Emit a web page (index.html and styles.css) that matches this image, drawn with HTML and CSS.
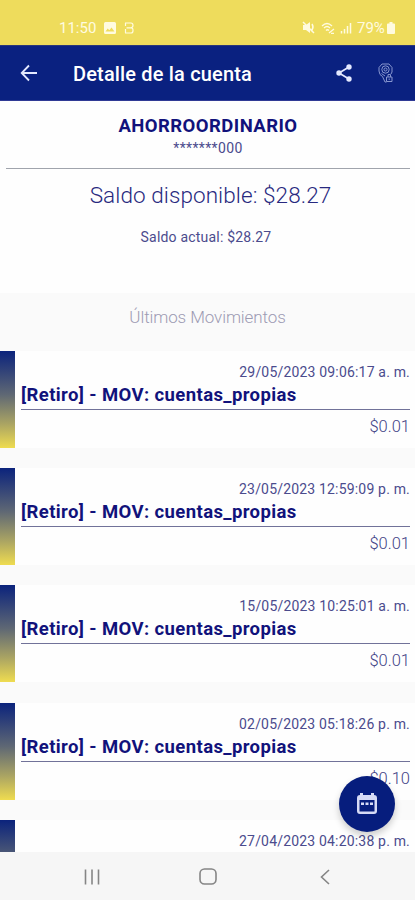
FILE: index.html
```html
<!DOCTYPE html>
<html lang="es">
<head>
<meta charset="utf-8">
<meta name="viewport" content="width=device-width, initial-scale=1">
<title>Detalle de la cuenta</title>
<link rel="stylesheet" href="styles.css">
</head>
<body>
<div class="screen">
  <header class="status">
    <span class="clock">11:50</span>
    <svg class="status-photo" width="12" height="12" viewBox="0 0 12 12"><path fill="currentColor" fill-rule="evenodd" d="M1.500 0h9Q12 0 12 1.500v9Q12 12 10.500 12h-9Q0 12 0 10.500v-9Q0 0 1.500 0ZM1.500 9.500h9L7.500 5.500 5.300 8.300 3.700 6.600Z"/></svg>
    <svg class="status-b" width="10" height="12" viewBox="0 0 10 12" fill="none" stroke="currentColor" stroke-width="1.200"><path d="M1 1h6q2 0 2 2.300T7 5.800H2.500M1 11h6q2 0 2-2.600T7 5.800M1.500 1v3M1.500 7v4"/></svg>
    <svg class="status-mute" width="13" height="13" viewBox="0 0 13 13"><path fill="currentColor" d="M1 4h3l4-3v11L4 9H1Z"/><path d="M1 1l11 11M10 3q2 3 0 6" fill="none" stroke="currentColor" stroke-width="1.500"/></svg>
    <svg class="status-wifi" width="15" height="12" viewBox="0 0 15 12" fill="none" stroke="currentColor" stroke-width="1.300"><path d="M1 4q5-5 10 0M3 6q3-3 6 0M5 8.500q1.500-1.500 3 0M8 11l5-4M10 11.500h3"/></svg>
    <svg class="status-signal" width="12" height="12" viewBox="0 0 12 12" stroke="currentColor" stroke-width="1.500"><path d="M1.500 9v2.500M4.500 7v4.500M7.500 4v7.500M10.500 1v10.500"/></svg>
    <span class="percent">79%</span>
    <svg class="status-battery" width="8" height="12" viewBox="0 0 8 12"><path fill="currentColor" d="M2.500 0h3v1.500H7q1 0 1 1V11q0 1-1 1H1q-1 0-1-1V2.500q0-1 1-1h1.500Z"/></svg>
  </header>
  <nav class="appbar">
    <svg class="back" width="18" height="18" viewBox="0 0 18 18" fill="none" stroke="currentColor" stroke-width="1.800"><path d="M17 9H2M9 1.500 1.700 9 9 16.500"/></svg>
    <h1 class="title">Detalle de la cuenta</h1>
    <svg class="share" width="16" height="18" viewBox="0 0 16 18"><path d="M13 3 3 9l10 6" fill="none" stroke="currentColor" stroke-width="1.700"/><g fill="currentColor"><circle cx="13" cy="3" r="2.700"/><circle cx="3" cy="9" r="2.700"/><circle cx="13" cy="15" r="2.700"/></g></svg>
    <svg class="pin" width="15" height="20" viewBox="0 0 15 20" fill="none" stroke="currentColor" stroke-width="1"><path d="M8.500 19H7L4.500 13.500 2 11.500 1 8V4.500L4 1h7l3 3.500V9l-1 2"/><circle cx="7.500" cy="6.500" r="3.700"/><circle cx="7.500" cy="6.500" r="1.500"/><path d="M3.500 10.500 7 13M8.500 14H14v4.500H8.500ZM10 14v-2.500h2.500V14M11.200 15.500v1.500"/></svg>
  </nav>
  <main class="content">
    <section class="account">
      <h2 class="account-name">AHORROORDINARIO</h2>
      <p class="account-number">*******000</p>
      <p class="available">Saldo disponible: $28.27</p>
      <p class="current">Saldo actual: $28.27</p>
    </section>
    <h3 class="section-title">Últimos Movimientos</h3>
    <section class="movements">
      <article class="movement"><i class="strip"></i><div class="details"><time>29/05/2023 09:06:17 a. m.</time><h4>[Retiro] - MOV: cuentas_propias</h4><p>$0.01</p></div></article>
      <article class="movement"><i class="strip"></i><div class="details"><time>23/05/2023 12:59:09 p. m.</time><h4>[Retiro] - MOV: cuentas_propias</h4><p>$0.01</p></div></article>
      <article class="movement"><i class="strip"></i><div class="details"><time>15/05/2023 10:25:01 a. m.</time><h4>[Retiro] - MOV: cuentas_propias</h4><p>$0.01</p></div></article>
      <article class="movement"><i class="strip"></i><div class="details"><time>02/05/2023 05:18:26 p. m.</time><h4>[Retiro] - MOV: cuentas_propias</h4><p>$0.10</p></div></article>
      <article class="movement"><i class="strip"></i><div class="details"><time>27/04/2023 04:20:38 p. m.</time></div></article>
    </section>
  </main>
  <button class="fab" aria-label="Calendario">
    <svg width="20" height="22" viewBox="0 0 20 22"><path fill="currentColor" fill-rule="evenodd" d="M3 2V0h3v2h8V0h3v2q3 0 3 3v13q0 3-3 3H3q-3 0-3-3V5q0-3 3-3ZM2.500 7v11.500h15V7Z"/><path fill="currentColor" d="M4 9.500h3V12H4Zm4.500 0h3V12h-3ZM13 9.500h3V12h-3Z"/></svg>
  </button>
  <footer class="navbar">
    <svg width="16" height="16" viewBox="0 0 16 16" fill="none" stroke="currentColor" stroke-width="1.600"><path d="M1.500 .5v15M8 .5v15M14.500 .5v15"/></svg>
    <svg width="18" height="17" viewBox="0 0 18 17" fill="none" stroke="currentColor" stroke-width="1.600"><rect x="1" y="1" width="16" height="15" rx="4.500"/></svg>
    <svg width="10" height="16" viewBox="0 0 10 16" fill="none" stroke="currentColor" stroke-width="1.600"><path d="M9 1 1.500 8 9 15"/></svg>
  </footer>
</div>
</body>
</html>
```
FILE: styles.css
```css
* { box-sizing: border-box; }
body, h1, h2, h3, h4, p { margin: 0; }
body { font-family: Roboto, sans-serif; background: #fafafa; color: #11127b; }
svg { display: block; flex: none; }
.screen { position: relative; height: 900px; overflow: hidden; display: flex; flex-direction: column; }
.status { height: 45px; flex: none; background: #eedc5c; color: #fffbe0; display: flex; align-items: center; padding: 10px 20px 0 59px; font-size: 15px; }
.clock { width: 45px; }
.status-b { margin-left: 8px; }
.status-mute { margin-left: auto; }
.status-wifi { margin-left: 6px; }
.status-signal { margin: 0 5px 0 4px; }
.percent { width: 30px; }
.appbar { height: 56px; flex: none; background: #0a2180; border-top: 1px solid #29377a; border-bottom: 1px solid #303a95; color: #e4e9ff; display: flex; align-items: center; padding: 0 21px; }
.back { margin: 0 35px 0 -1px; }
.title { flex: 1; font-size: 20px; line-height: 26px; font-weight: 500; letter-spacing: .16px; white-space: nowrap; color: #fff; padding-top: 2px; }
.share { margin-right: 26px; }
.pin { color: #8796cf; margin-right: 1px; }
.content { flex: 1; min-height: 0; overflow: hidden; }
.account { height: 192px; background: #fefefe; text-align: center; padding: 13px 5px 0 6px; }
.account-name { font-size: 18.500px; line-height: 24px; font-weight: 700; letter-spacing: .45px; }
.account-number { height: 31px; border-bottom: 1px solid #a0a4ac; font-size: 14px; line-height: 21px; font-weight: 400; letter-spacing: .35px; color: #4b4b8d; }
.available { margin-top: 10px; padding-left: 5px; font-size: 22.500px; line-height: 32px; font-weight: 300; letter-spacing: .08px; color: #28297f; }
.current { margin-top: 16px; padding-right: 4px; font-size: 14px; line-height: 20px; letter-spacing: .2px; }
.current, time { color: #4b4b8d; }
.section-title { height: 58px; padding-top: 12px; text-align: center; color: #9d9bb3; font-size: 17px; line-height: 24px; font-weight: 300; letter-spacing: -.1px; }
.movements { display: flex; flex-direction: column; gap: 20.200px; }
.movement { height: 97px; flex: none; display: flex; background: #fefefe; }
.strip { width: 15px; margin-right: 6px; background: linear-gradient(#0b237c, #5f6874 45%, #aaa463 75%, #efdc50); }
.details { flex: 1; padding: 11px 5px 0 0; }
time { display: block; text-align: right; font-size: 14px; line-height: 20px; letter-spacing: .18px; }
h4 { border-bottom: 1px solid #717299; height: 28px; font-size: 18.500px; line-height: 26px; font-weight: 700; letter-spacing: .39px; white-space: nowrap; }
.details p { text-align: right; font-size: 16.500px; line-height: 24px; font-weight: 300; padding-top: 5px; color: #424386; }
.fab { position: absolute; left: 339px; top: 776px; width: 56px; height: 56px; padding: 0; border: 0; border-radius: 50%; background: #061d7d; color: #d6dbf6; display: grid; place-items: center; box-shadow: 0 4px 7px #0003; }
.navbar { height: 48px; flex: none; background: #f6f6f6; color: #858585; display: flex; align-items: center; gap: 99px; padding: 1px 0 0 84px; }
.navbar svg:last-child { margin-left: 4px; }
```
